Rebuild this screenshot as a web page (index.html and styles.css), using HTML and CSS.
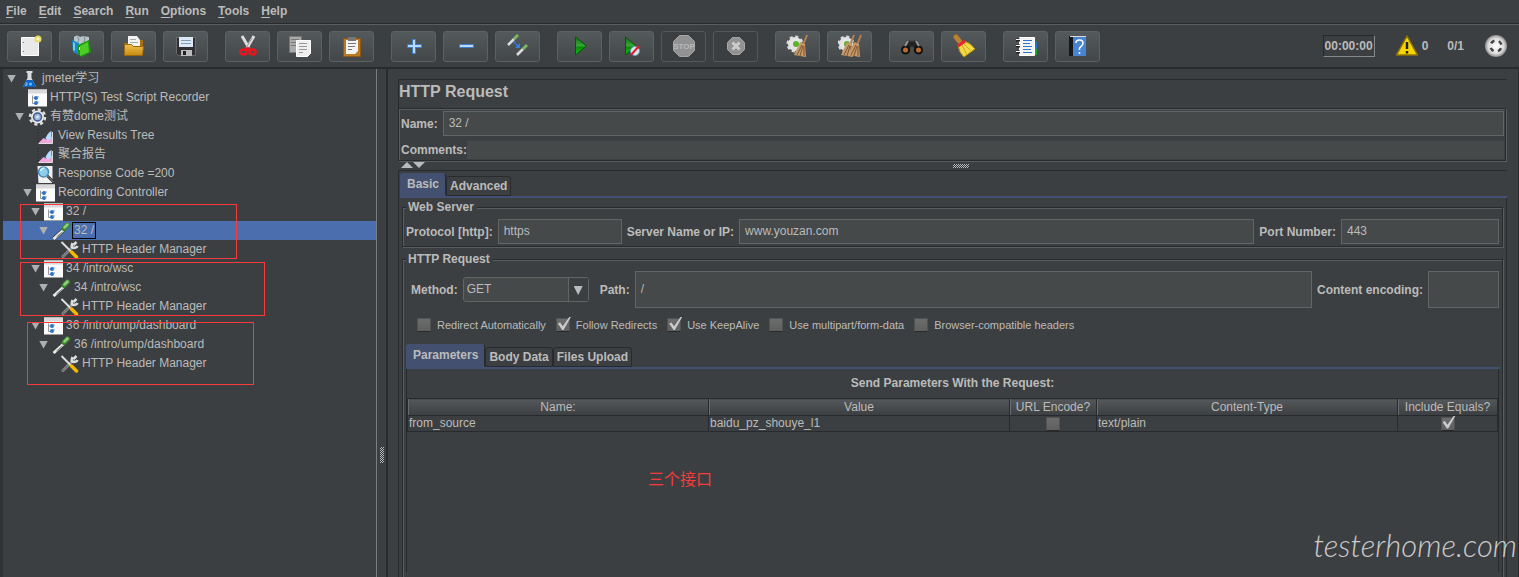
FILE: index.html
```html
<!DOCTYPE html>
<html lang="en">
<head>
<meta charset="utf-8">
<title>HTTP Request</title>
<link rel="stylesheet" href="styles.css">
</head>
<body>
<svg class="defs" aria-hidden="true">
  <defs>
    <linearGradient id="green" x1="0" y1="0" x2="0" y2="1"><stop offset="0" stop-color="#087508"/><stop offset=".5" stop-color="#3ea63a"/><stop offset=".55" stop-color="#078a07"/><stop offset="1" stop-color="#13c413"/></linearGradient>
    <linearGradient id="gold" x1="0" y1="0" x2="0" y2="1"><stop offset="0" stop-color="#f0c050"/><stop offset="1" stop-color="#c88a10"/></linearGradient>
    <radialGradient id="ball"><stop offset="0" stop-color="#fff"/><stop offset=".7" stop-color="#ddd"/><stop offset="1" stop-color="#8c8c8c"/></radialGradient>
    <symbol id="controller" viewBox="0 0 19 17"><path fill="#fbfbfb" d="M0 0h19v17H0z"/><path fill="#d9d9dc" d="M0 0h19v4H0z"/><path stroke="#999" fill="none" d="M4.500 6v8H7M4.500 8.500H7"/><circle cx="8" cy="8.500" r="2" fill="#2c72c7"/><circle cx="8" cy="13.500" r="2" fill="#2c72c7"/><path stroke="#7b9cc8" d="M9 7.500h2M9 12.500h2"/></symbol>
    <symbol id="flask" viewBox="0 0 18 18"><path fill="#d8dce0" d="M6 1h6v2h-1v5l4 8q0 1-1 1H4q-1 0-1-1l4-8V3H6z"/><path fill="#0d63c4" d="M6 10h6l3 6q0 1-1 1H4q-1 0-1-1z"/><path fill="#5cb0f5" d="M5.500 12l2 1-1 3h-2z"/><circle cx="10" cy="14" r="1.500" fill="#62c3ff"/></symbol>
    <symbol id="gear" viewBox="0 0 18 18"><circle cx="9" cy="9" r="7.500" fill="none" stroke="#ddd" stroke-width="2.500" stroke-dasharray="3.200 2.690"/><circle cx="9" cy="9" r="6.500" fill="#e8e8e8"/><circle cx="9" cy="9" r="4" fill="#9fb6d8" stroke="#385b91" stroke-width="1.500"/><circle cx="9" cy="9" r="1.300" fill="#e8eef8"/></symbol>
    <symbol id="chart" viewBox="0 0 18 18"><path stroke="#222" fill="none" stroke-dasharray="1 2" d="M1.500 2v14"/><path fill="#f2a4dc" d="M2 16l5-5 4 2 5-4v7z"/><path fill="#b8dcff" d="M9 11q3-6 6-7v7l-4 3z"/><path stroke="#ddd" fill="none" d="M2 16.500h14V5"/></symbol>
    <symbol id="lens" viewBox="0 0 18 18"><path fill="#f1f1f1" d="M1 1h15v17H2z"/><circle cx="7" cy="7" r="5" fill="#8ccdf0" stroke="#498db9" stroke-width="1.500"/><path stroke="#ddf4ff" stroke-width="1.500" fill="none" d="M4 6q1-3 4-3"/><path stroke="#222" stroke-width="2.500" d="M11 11l6 6"/><path stroke="#aaa" d="M11 11l6 6"/></symbol>
    <symbol id="dropper" viewBox="0 0 18 18"><path stroke="#303334" stroke-width="4" d="M1 17L12 7"/><path stroke="#e8e8e8" stroke-width="3" d="M1 17L11 8"/><path stroke="#777" d="M4 15l6-5"/><path stroke="#3d8530" stroke-width="5" stroke-linecap="round" d="M11.500 6.500l3.500-3.500"/><path stroke="#8fd077" stroke-width="2.500" stroke-linecap="round" d="M12 5.500l3-3"/></symbol>
    <symbol id="tools" viewBox="0 0 18 18"><path stroke="#8b8b8b" stroke-width="3" stroke-linecap="round" d="M2.500 15.500l10-10"/><path stroke="#3c3f41" stroke-dasharray="1 1" d="M2 16l9-9"/><path stroke="#ddd" stroke-width="2.500" fill="none" d="M16 1l-3 3M12 2q-2 5 1 5t4-2"/><path stroke="#ddd" stroke-width="2" d="M1 1l9 9"/><path stroke="#f4b800" stroke-width="3.500" stroke-linecap="round" d="M11 11l5 5"/></symbol>
    <symbol id="new" viewBox="0 0 24 24"><path fill="#e9e9e9" stroke="#fff" d="M3.500 3.500h17v18h-17z"/><path fill="#777" d="M5 8h1v1H5zm0 9h1v1H5z"/><circle cx="20" cy="5" r="3.500" fill="#eadb66"/><circle cx="20" cy="5" r="1.500" fill="#fffbd0"/></symbol>
    <symbol id="templates" viewBox="0 0 24 24"><path fill="#b9c3c8" d="M4 3q3-3 6 0l3-1 6 1v8H4z"/><path stroke="#718792" fill="none" d="M7 3q3 1 1 5M13 2q3 1 1 6"/><path fill="#168ac8" d="M2 6l7 3v12l-6-3z"/><path fill="#70ccec" d="M3 8l2 1v8l-2-1z"/><path fill="#19980b" d="M8 11l11-5 2 12-9 5-4-3z"/><path fill="#4fcb29" d="M10 12l8-4 1 10-9 4z"/><path fill="#fff" d="M9 13h1v3H9z"/></symbol>
    <symbol id="open" viewBox="0 0 24 24"><path fill="#a86f10" d="M2 9h7l2-3h10v15H3z"/><path fill="#f3f3f3" d="M6 2h9l3 4v10H6z"/><path stroke="#aaa" d="M8 5.500h6M8 8.500h8"/><path fill="url(#gold)" stroke="#9b680d" d="M2.500 10.500h7l2 2h10l-1 9h-18z"/></symbol>
    <symbol id="save" viewBox="0 0 24 24"><path fill="#303033" stroke="#68696b" d="M2.500 3.500h19v18h-17l-2-2z"/><path fill="#dbe8f5" d="M5 3h14v10H5z"/><path stroke="#829cb7" d="M7 6.500h10M7 9.500h10"/><path fill="#bbb" d="M7 16h11v6H7z"/><path fill="#222" d="M9 17h3v4H9z"/></symbol>
    <symbol id="cut" viewBox="0 0 24 24"><path stroke="#ddd" stroke-width="3" d="M6 2l7 12M18 2l-7 12"/><path stroke="#999" d="M16 4l-6 10"/><path stroke="#ed151d" stroke-width="2.500" fill="none" d="M12 13.500l-2 3M12 13.500l2 3"/><ellipse cx="7.500" cy="18" rx="3" ry="2.500" fill="none" stroke="#ed151d" stroke-width="2.500"/><ellipse cx="16.500" cy="18" rx="3" ry="2.500" fill="none" stroke="#ed151d" stroke-width="2.500"/></symbol>
    <symbol id="copy" viewBox="0 0 24 24"><path fill="#aaa" stroke="#777" d="M1.500 2.500h12v16h-12z"/><path stroke="#777" d="M3 5.500h8M3 8.500h8M3 11.500h8"/><path fill="#eee" stroke="#fff" d="M8.500 6.500h14v13l-3 3h-11z"/><path stroke="#999" d="M11 9.500h8M11 12.500h8M11 15.500h8M11 18.500h4"/></symbol>
    <symbol id="paste" viewBox="0 0 24 24"><path fill="#bb7a22" stroke="#8e5914" d="M3.500 4.500h17v18h-17z"/><path fill="#f3f3f3" d="M6 6h12v11l-3 3H6z"/><path fill="#777" d="M8 3h8v4H8z"/><path stroke="#777" d="M8 9.500h8M8 12.500h7M8 15.500h4"/></symbol>
    <symbol id="plus" viewBox="0 0 24 24"><path stroke="#3f7fca" stroke-width="4" d="M12 5v15M5 12h15"/><path stroke="#b9d8f7" stroke-width="2" d="M12 6v13M6 12h13"/></symbol>
    <symbol id="minus" viewBox="0 0 24 24"><path stroke="#3f7fca" stroke-width="4" d="M5 12h15"/><path stroke="#b9d8f7" stroke-width="2" d="M6 12h13"/></symbol>
    <symbol id="toggle" viewBox="0 0 24 24"><path stroke="#ddd" stroke-width="2.500" d="M2 11l6-6M11 21l6-6"/><path stroke="#7db65e" stroke-width="3" d="M8 5l4-4M17 15l4-4"/><path stroke="#2f7ee4" stroke-width="2" stroke-dasharray="2 1" d="M8 8l5 5"/><path fill="#2f7ee4" d="M14 9v5H9z"/></symbol>
    <symbol id="play" viewBox="0 0 24 24"><path fill="url(#green)" stroke="#075407" d="M7.500 3v18L18.500 12z"/></symbol>
    <symbol id="playnow" viewBox="0 0 24 24"><path fill="url(#green)" stroke="#075407" d="M5.500 3v18L16 12z"/><circle cx="15" cy="17" r="4.500" fill="#d9e7ed" stroke="#6c98b7"/><path stroke="#df1c2a" stroke-width="2" d="M11 21l8-9"/></symbol>
    <symbol id="stop" viewBox="0 0 24 24"><path fill="#929292" stroke="#a5a5a5" d="M7.500 1.500h9l6 6v9l-6 6h-9l-6-6v-9z"/><text x="12" y="15" class="stop-word">STOP</text></symbol>
    <symbol id="shutdown" viewBox="0 0 24 24"><path fill="#929292" stroke="#a5a5a5" d="M8.500 3.500h7l5 5v7l-5 5h-7l-5-5v-7z"/><path stroke="#ccc" stroke-width="3" d="M8.500 8.500l7 7M15.500 8.500l-7 7"/></symbol>
    <symbol id="broom-shape" viewBox="0 0 24 24"><path stroke="#b18150" stroke-width="2" d="M21 1l-4 10"/><path fill="#c69a6b" d="M14 8l5 2 1 13-12-2z"/><path stroke="#80542d" d="M16 11l-5 10M17 12l-3 10M18 12v10"/></symbol>
    <symbol id="clear" viewBox="0 0 24 24"><circle cx="9" cy="10" r="7" fill="#e5e5e5" stroke="#ddd" stroke-width="3" stroke-dasharray="3 2.500"/><circle cx="10" cy="10" r="3" fill="#58b429"/><use href="#broom-shape" width="24" height="24"/></symbol>
    <symbol id="clearall" viewBox="0 0 24 24"><circle cx="8" cy="10" r="7" fill="#e5e5e5" stroke="#ddd" stroke-width="3" stroke-dasharray="3 2.500"/><circle cx="9" cy="10" r="3" fill="#58b429"/><use href="#broom-shape" x="-5" width="24" height="24"/><use href="#broom-shape" x="2" width="24" height="24"/></symbol>
    <symbol id="search" viewBox="0 0 24 24"><path fill="#222" stroke="#4b4b4b" d="M2 14L7 6l4 1h2l4-1 5 8v4l-8 1-1-6h-2l-1 6-8-1z"/><circle cx="5.500" cy="16" r="3.500" fill="#bd6b2c" stroke="#111" stroke-width="2"/><circle cx="18.500" cy="16" r="3.500" fill="#bd6b2c" stroke="#111" stroke-width="2"/><path stroke="#9a9a9a" stroke-width="2" d="M5 12l3-5M19 12l-3-5"/></symbol>
    <symbol id="broom" viewBox="0 0 24 24"><path stroke="#b98032" stroke-width="5" stroke-linecap="round" d="M4 3l4 5"/><path fill="#f2d946" stroke="#b38e0d" d="M6 11l6-4q7 2 11 8l-11 8q-5-4-6-12z"/><path stroke="#cda71c" fill="none" d="M10 11l5 10M12 10l8 8"/><path stroke="#e7222f" stroke-width="3" d="M6 12l7-5"/></symbol>
    <symbol id="log" viewBox="0 0 24 24"><path fill="#1c75c7" d="M20 8h3v7h-3z"/><path fill="#18a62a" d="M20 15h3v6h-3z"/><path fill="#f3f3f3" stroke="#fff" d="M5.500 3.500h15v18h-15z"/><path stroke="#2876ce" d="M9 6.500h9M9 9.500h7M9 12.500h9M9 15.500h8M9 18.500h9"/><path stroke="#222" stroke-width="3" d="M2 6h4M2 12h4M2 18h4"/><path stroke="#fff" d="M2 5.500h4M2 11.500h4M2 17.500h4"/></symbol>
    <symbol id="help" viewBox="0 0 24 24"><path fill="#151719" d="M3 2h5v20H3z"/><path fill="#4784d1" d="M7 3h13v19H7z"/><path stroke="#ddd" d="M4 2.500h16"/><path fill="none" stroke="#fff" stroke-width="1.500" d="M10 9q0-3 3.500-3t3.500 3q0 2-3.500 5v2M13.500 18v2"/></symbol>
    <symbol id="warning" viewBox="0 0 24 24"><path fill="#f8d404" stroke="#8d7300" stroke-width="1.500" stroke-linejoin="round" d="M12 2l10.500 19h-21z"/><path stroke="#222" stroke-width="2.500" d="M12 8v7M12 17v2.500"/></symbol>
    <symbol id="globe" viewBox="0 0 24 24"><circle cx="12" cy="12" r="11" fill="url(#ball)"/><circle cx="12" cy="12" r="5.500" fill="none" stroke="#444" stroke-width="2.500" stroke-dasharray="4 4.640" stroke-dashoffset="-2.300"/></symbol>
  </defs>
</svg>

<nav class="menu">
  <a href="#"><u>F</u>ile</a><a href="#"><u>E</u>dit</a><a href="#"><u>S</u>earch</a><a href="#"><u>R</u>un</a><a href="#"><u>O</u>ptions</a><a href="#"><u>T</u>ools</a><a href="#"><u>H</u>elp</a>
</nav>

<header class="toolbar">
  <div class="group">
    <button aria-label="New"><svg><use href="#new"/></svg></button>
    <button aria-label="Templates"><svg><use href="#templates"/></svg></button>
    <button aria-label="Open"><svg><use href="#open"/></svg></button>
    <button aria-label="Save"><svg><use href="#save"/></svg></button>
  </div>
  <div class="group">
    <button aria-label="Cut"><svg><use href="#cut"/></svg></button>
    <button aria-label="Copy"><svg><use href="#copy"/></svg></button>
    <button aria-label="Paste"><svg><use href="#paste"/></svg></button>
  </div>
  <div class="group">
    <button aria-label="Expand all"><svg><use href="#plus"/></svg></button>
    <button aria-label="Collapse all"><svg><use href="#minus"/></svg></button>
    <button aria-label="Toggle"><svg><use href="#toggle"/></svg></button>
  </div>
  <div class="group">
    <button aria-label="Start"><svg><use href="#play"/></svg></button>
    <button aria-label="Start no pauses"><svg><use href="#playnow"/></svg></button>
    <button aria-label="Stop" disabled><svg><use href="#stop"/></svg></button>
    <button aria-label="Shutdown" disabled><svg><use href="#shutdown"/></svg></button>
  </div>
  <div class="group">
    <button aria-label="Clear"><svg><use href="#clear"/></svg></button>
    <button aria-label="Clear all"><svg><use href="#clearall"/></svg></button>
  </div>
  <div class="group">
    <button aria-label="Search"><svg><use href="#search"/></svg></button>
    <button aria-label="Reset search"><svg><use href="#broom"/></svg></button>
  </div>
  <div class="group">
    <button aria-label="Function helper"><svg><use href="#log"/></svg></button>
    <button aria-label="Help"><svg><use href="#help"/></svg></button>
  </div>
  <div class="status">
    <span class="timer">00:00:00</span>
    <span class="errors"><svg><use href="#warning"/></svg>0</span>
    <span class="threads">0/1</span>
    <svg><use href="#globe"/></svg>
  </div>
</header>

<main class="work">
  <aside class="tree">
    <ul>
      <li class="d0 open"><svg><use href="#flask"/></svg><span>jmeter学习</span></li>
      <li class="d1"><svg><use href="#controller"/></svg><span>HTTP(S) Test Script Recorder</span></li>
      <li class="d1 open"><svg><use href="#gear"/></svg><span>有赞dome测试</span></li>
      <li class="d2"><svg><use href="#chart"/></svg><span>View Results Tree</span></li>
      <li class="d2"><svg><use href="#chart"/></svg><span>聚合报告</span></li>
      <li class="d2"><svg><use href="#lens"/></svg><span>Response Code =200</span></li>
      <li class="d2 open"><svg><use href="#controller"/></svg><span>Recording Controller</span></li>
      <li class="d3 open"><svg><use href="#controller"/></svg><span>32 /</span></li>
      <li class="d4 open selected"><svg><use href="#dropper"/></svg><span>32 /</span></li>
      <li class="d5"><svg><use href="#tools"/></svg><span>HTTP Header Manager</span></li>
      <li class="d3 open"><svg><use href="#controller"/></svg><span>34 /intro/wsc</span></li>
      <li class="d4 open"><svg><use href="#dropper"/></svg><span>34 /intro/wsc</span></li>
      <li class="d5"><svg><use href="#tools"/></svg><span>HTTP Header Manager</span></li>
      <li class="d3 open"><svg><use href="#controller"/></svg><span>36 /intro/ump/dashboard</span></li>
      <li class="d4 open"><svg><use href="#dropper"/></svg><span>36 /intro/ump/dashboard</span></li>
      <li class="d5"><svg><use href="#tools"/></svg><span>HTTP Header Manager</span></li>
    </ul>
  </aside>
  <div class="splitter"><i class="grip"></i></div>

  <section class="editor">
    <div class="pane">
      <h1>HTTP Request</h1>
      <div class="etched identity">
        <div class="name-row"><label for="name">Name:</label><input id="name" value="32 /"></div>
        <div class="comment-row"><label for="comments">Comments:</label><input id="comments"></div>
      </div>
      <div class="hsplit"><i class="up"></i><i class="down"></i><i class="grip wide"></i></div>
      <div class="details">
        <div class="tabs" role="tablist"><button role="tab" aria-selected="true">Basic</button><button role="tab" aria-selected="false">Advanced</button></div>
        <div class="tab-body">
          <fieldset class="etched server">
            <legend>Web Server</legend>
            <div class="fields">
              <label for="protocol">Protocol [http]:</label><input id="protocol" class="protocol" value="https">
              <label for="host">Server Name or IP:</label><input id="host" class="grow" value="www.youzan.com">
              <label for="port">Port Number:</label><input id="port" class="port" value="443">
            </div>
          </fieldset>
          <fieldset class="etched request">
            <legend>HTTP Request</legend>
            <div class="fields path-row">
              <label for="method">Method:</label>
              <div class="combo"><select id="method"><option>GET</option></select><i></i></div>
              <label for="path" class="path-label">Path:</label><input id="path" class="grow tall" value="/">
              <label for="encoding">Content encoding:</label><input id="encoding" class="encoding tall">
            </div>
            <div class="checks">
              <label><input type="checkbox">Redirect Automatically</label>
              <label><input type="checkbox" checked>Follow Redirects</label>
              <label><input type="checkbox" checked>Use KeepAlive</label>
              <label><input type="checkbox">Use multipart/form-data</label>
              <label><input type="checkbox">Browser-compatible headers</label>
            </div>
            <div class="tabs" role="tablist"><button role="tab" aria-selected="true">Parameters</button><button role="tab" aria-selected="false">Body Data</button><button role="tab" aria-selected="false">Files Upload</button></div>
            <div class="params">
              <h2>Send Parameters With the Request:</h2>
              <table>
                <colgroup><col><col><col class="c-url"><col><col class="c-equals"></colgroup>
                <thead><tr><th>Name:</th><th>Value</th><th>URL Encode?</th><th>Content-Type</th><th>Include Equals?</th></tr></thead>
                <tbody><tr><td>from_source</td><td>baidu_pz_shouye_l1</td><td class="tick"><input type="checkbox" aria-label="URL Encode"></td><td>text/plain</td><td class="tick"><input type="checkbox" checked aria-label="Include Equals"></td></tr></tbody>
              </table>
            </div>
          </fieldset>
        </div>
      </div>
    </div>
  </section>
</main>

<div class="mark mark-a"></div>
<div class="mark mark-b"></div>
<div class="mark mark-c"></div>
<div class="note">三个接口</div>
<div class="watermark">testerhome.com</div>
</body>
</html>
```

FILE: styles.css
```css
:root {
  --bg: #3c3f41;
  --dark: #282b2d;
  --light: #5b5e60;
  --field: #45494a;
  --edge: #646464;
  --text: #bbbbbb;
  --tab: #43506f;
}

* { box-sizing: border-box; }

body {
  margin: 0;
  height: 100vh;
  display: flex;
  flex-direction: column;
  position: relative;
  overflow: hidden;
  background: var(--bg);
  color: var(--text);
  font: 12px/16px "Liberation Sans", "Noto Sans CJK SC", sans-serif;
}

button, input, select { font: inherit; color: inherit; margin: 0; }

.defs { position: absolute; width: 0; height: 0; }

/* Menu and toolbar */
.menu {
  display: flex;
  gap: 12px;
  height: 24px;
  padding: 3px 6px;
  border-bottom: 1px solid var(--dark);
  font-weight: bold;
}
.menu a { color: inherit; text-decoration: none; }
.menu u { text-underline-offset: 2px; }

.toolbar {
  display: flex;
  align-items: center;
  gap: 17px;
  height: 45px;
  padding: 0 11px 0 7px;
  border-top: 1px solid var(--light);
  border-bottom: 2px solid var(--dark);
}
.group { display: flex; gap: 7px; }
.group button {
  display: grid;
  place-items: center;
  width: 45px;
  height: 31px;
  padding: 0;
  border: 1px solid #5e6162;
  border-radius: 3px;
  background: linear-gradient(#54595b, #43474a);
}
.group button:disabled { background: none; border-color: #54585a; }
.toolbar svg { display: block; width: 24px; height: 24px; }
.stop-word {
  font: bold 8px "Liberation Sans", sans-serif;
  fill: #b9b9b9;
  text-anchor: middle;
}

.status { display: flex; align-items: center; margin-left: auto; font-weight: bold; }
.timer {
  height: 22px;
  padding: 2px 1px;
  border: 1px solid;
  border-color: #25282a #84898b #84898b #25282a;
  margin-right: 20px;
}
.errors { display: flex; align-items: center; gap: 3px; margin-right: 19px; }
.threads { margin-right: 20px; }

/* Test plan tree */
.work { flex: 1; display: flex; min-height: 0; }
.tree {
  width: 377px;
  flex: none;
  border-left: 3px solid #303335;
  border-right: 1px solid #7a7d7f;
}
.tree ul { margin: 0; padding: 0; list-style: none; }
.tree li { display: flex; align-items: center; height: 19px; }
.tree li::before {
  content: "";
  width: 9px;
  height: 8px;
  margin-right: 4px;
}
.tree li.open::before { background: #aeb0b0; clip-path: polygon(0 0, 100% 0, 50% 100%); }
.tree svg { width: 19px; height: 18px; margin-right: 1px; }
.tree span { padding: 0 1px; border: 1px solid transparent; line-height: 15px; }
.d0 { padding-left: 4px; }
.d1 { padding-left: 12px; }
.d2 { padding-left: 20px; }
.d3 { padding-left: 28px; }
.d4 { padding-left: 36px; }
.d5 { padding-left: 44px; }
.selected { background: #4b6eaf; }
.tree .selected span { border-color: #000; }

.splitter { width: 11px; flex: none; border-right: 2px solid var(--dark); }
.grip {
  display: block;
  width: 4px;
  height: 16px;
  margin: 378px 0 0 3px;
  background: conic-gradient(#bdbdbd 25%, #303335 0 50%, #bdbdbd 0 75%, #303335 0) 0 0 / 2px 2px;
}

/* Editor */
.editor { flex: 1; min-width: 0; padding: 10px 11px 0 10px; border-right: 1px solid var(--dark); }
.pane { display: flex; flex-direction: column; height: 100%; }
h1 {
  margin: 0;
  padding: 2px 0 6px;
  border: 1px solid var(--dark);
  border-width: 1px 0 0 1px;
  font-size: 16px;
  line-height: 20px;
}
.etched {
  border: 1px solid var(--dark);
  box-shadow: 1px 1px 0 var(--light), inset 1px 1px 0 var(--light);
}
.identity { padding: 2px 1px 1px 2px; margin-right: 1px; }
.name-row, .comment-row { display: flex; align-items: center; }
.name-row { gap: 5px; margin-bottom: 5px; }
label { font-weight: bold; white-space: nowrap; }
input:not([type]) {
  height: 25px;
  min-width: 0;
  padding: 0 5px 1px;
  border: 1px solid var(--edge);
  background: var(--field);
}
.name-row input:not([type]) { flex: 1; }
.comment-row input:not([type]) { flex: 1; height: 18px; border: 0; }

.hsplit { display: flex; height: 9px; padding: 1px 3px; position: relative; }
.up, .down { width: 12px; height: 6px; background: #bbb; }
.up { clip-path: polygon(50% 0, 100% 100%, 0 100%); }
.down { clip-path: polygon(0 0, 100% 0, 50% 100%); }
.grip.wide { width: 16px; height: 4px; margin: 0; position: absolute; left: 50%; top: 3px; }

.details {
  flex: 1;
  display: flex;
  flex-direction: column;
  padding: 2px 0 0 1px;
  border: 1px solid var(--dark);
  border-width: 1px 0 0 1px;
}
.tabs { display: flex; align-items: flex-end; border-bottom: 2px solid var(--tab); }
.tabs button {
  height: 20px;
  padding: 0 3px;
  border: 1px solid var(--dark);
  border-radius: 3px 3px 0 0;
  background: none;
  font-weight: bold;
}
.tabs button[aria-selected="true"] {
  height: 23px;
  padding: 0 6px 2px;
  border-color: var(--tab);
  border-right-color: var(--dark);
  background: var(--tab);
}
.tab-body {
  flex: 1;
  display: flex;
  flex-direction: column;
  gap: 4px;
  padding: 1px 3px 0 2px;
  border-right: 1px solid var(--dark);
}
fieldset { min-width: 0; margin: 0; padding: 0 3px; }
legend { padding: 0 3px 0 2px; margin-left: 0; background: var(--bg); font-weight: bold; }
.fields { display: flex; align-items: center; gap: 5px; }
.server .fields { padding: 4px 0 2px; }
.protocol { width: 124px; }
.port { width: 158px; }
.grow { flex: 1; }
.request { flex: 1; border-bottom: 0; }
.path-row { padding: 4px 0 9px 5px; }
input.tall:not([type]) { height: 37px; }
.encoding { width: 71px; }
.path-label { margin-left: 6px; }
.combo { position: relative; width: 126px; height: 25px; }
.combo select {
  width: 100%;
  height: 100%;
  padding: 0 3px 2px;
  border: 1px solid var(--edge);
  border-radius: 3px;
  background: var(--field);
  appearance: none;
}
.combo i {
  position: absolute;
  inset: 1px 1px 1px auto;
  width: 20px;
  border-left: 1px solid var(--edge);
  background: var(--bg);
  pointer-events: none;
}
.combo i::after {
  content: "";
  position: absolute;
  inset: 8px 5px 6px;
  background: #bbb;
  clip-path: polygon(0 0, 100% 0, 50% 100%);
}

.checks { display: flex; gap: 10px; padding: 0 10px 11px 11px; font-size: 11px; }
.checks label { display: flex; align-items: center; gap: 6px; font-weight: normal; }
input[type="checkbox"] {
  appearance: none;
  position: relative;
  width: 14px;
  height: 14px;
  border: 1px solid #505354;
  border-bottom-color: #26292a;
  background: linear-gradient(#6c6c6c, #5f5f5f);
}
input[type="checkbox"]:checked::after {
  content: "";
  position: absolute;
  inset: -2px -2px 1px 1px;
  background: #ccc;
  clip-path: polygon(0 50%, 18% 42%, 38% 72%, 88% 0, 100% 0, 44% 100%, 34% 100%);
}

.request .tabs { margin-right: -1px; }
.params { border: 1px solid var(--dark); border-width: 0 1px 0 1px; height: calc(100% - 107px); }
h2 { margin: 0; padding: 6px 0 7px; font-size: 12px; line-height: 16px; text-align: center; }
table { width: 100%; border-collapse: collapse; table-layout: fixed; border: 1px solid var(--dark); }
.c-url { width: 87px; }
.c-equals { width: 100px; }
th, td { padding: 0 1px; line-height: 16px; border: 1px solid var(--dark); font-weight: normal; white-space: nowrap; }
td { line-height: 15px; }
th { background: linear-gradient(#54585b, #3c3f42); box-shadow: inset 1px 0 0 #686c6e; }
.tick { text-align: center; }
.tick input { display: block; margin: 0 auto; }

/* Annotations over the window */
.mark { position: absolute; border: 1px solid #f93a3a; }
.mark-a { left: 20px; top: 204px; width: 217px; height: 55px; }
.mark-b { left: 20px; top: 262px; width: 245px; height: 54px; }
.mark-c { left: 27px; top: 322px; width: 227px; height: 63px; }
.note {
  position: absolute;
  left: 648px;
  top: 466px;
  color: #f93a3a;
  font: 16px/24px "Noto Sans CJK SC", sans-serif;
}
.watermark {
  position: absolute;
  right: 2px;
  bottom: 12px;
  color: #ccc;
  font: italic 300 31px/40px Lato, "Liberation Sans", sans-serif;
}
```
